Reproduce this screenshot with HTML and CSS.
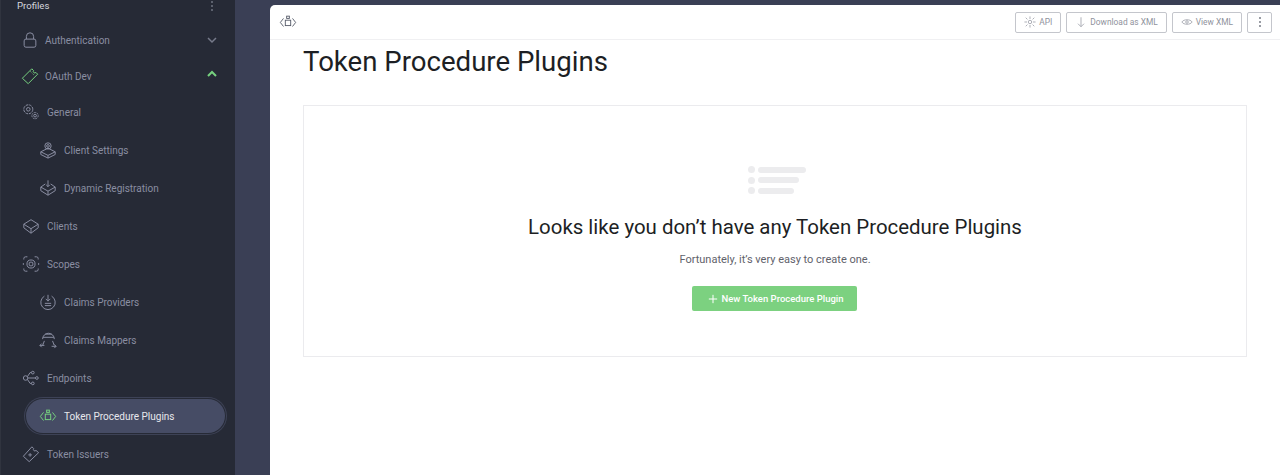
FILE: index.html
```html
<!DOCTYPE html>
<html>
  <head>
    <title>Token Procedure Plugins</title>
    <link rel="stylesheet" href="styles.css">
  </head>
  <body>
    <nav class="sidebar">
      <div class="profiles">
        <span>Profiles</span>
        <svg class="dots" width="4" height="12" viewBox="0 0 4 12"><circle cx="2" cy="2" r="1"/><circle cx="2" cy="6" r="1"/><circle cx="2" cy="10" r="1"/></svg>
      </div>
      <a class="item top">
        <svg class="icon" viewBox="0 0 20 20"><rect x="3.500" y="9" width="13" height="9" rx="2"/><path d="M6 9V6a4 4 0 0 1 8 0v3"/></svg>
        <span class="label">Authentication</span>
        <svg class="chev" viewBox="0 0 12 8"><path d="M2 2l4 4 4-4"/></svg>
      </a>
      <a class="item top">
        <svg class="icon green" viewBox="0 0 20 20"><path d="M1.500 12.500L12 2l2 2a1.500 1.500 0 0 0 2.500 2l2 2L8 18.500z"/><path d="M10.500 5l1 1M13 7.500l1 1"/></svg>
        <span class="label">OAuth Dev</span>
        <svg class="chev green" viewBox="0 0 12 8"><path d="M2 6l4-4 4 4"/></svg>
      </a>
      <a class="item main general">
        <svg class="icon" viewBox="0 0 20 20"><circle cx="7" cy="7" r="2"/><circle cx="7" cy="7" r="5" stroke-dasharray="3 1"/><circle cx="14.500" cy="14" r="1.500"/><circle cx="14.500" cy="14" r="3.500" stroke-dasharray="2 1"/></svg>
        <span class="label">General</span>
      </a>
      <a class="item sub">
        <svg class="icon" viewBox="0 0 20 20"><path d="M10 8L18 12 10 16 2 12z"/><path d="M2 12v3l8 4 8-4v-3M10 16v3"/><circle cx="10" cy="5.500" r="3.500"/><circle cx="10" cy="5.500" r="1.500"/></svg>
        <span class="label">Client Settings</span>
      </a>
      <a class="item sub">
        <svg class="icon" viewBox="0 0 20 20"><path d="M7 5.500L2 9l8 4.500L18 9l-5-3.500"/><path d="M2 9v4l8 5 8-5V9M10 13.500V18M10 1.500v7M8 6.500l2 2 2-2"/></svg>
        <span class="label">Dynamic Registration</span>
      </a>
      <a class="item main">
        <svg class="icon" viewBox="0 0 20 20"><path d="M10 3L18 8l-8 5-8-5z"/><path d="M2 8v4l8 6 8-6V8M10 13v5"/></svg>
        <span class="label">Clients</span>
      </a>
      <a class="item main">
        <svg class="icon" viewBox="0 0 20 20"><path d="M2 5V4a2 2 0 0 1 2-2h2M14 2h2a2 2 0 0 1 2 2v1M18 15v1a2 2 0 0 1-2 2h-2M6 18H4a2 2 0 0 1-2-2v-1M1.500 9v2M18.500 9v2"/><circle cx="10" cy="10" r="4.500"/><rect x="8" y="8" width="4" height="4" rx="1"/></svg>
        <span class="label">Scopes</span>
      </a>
      <a class="item sub">
        <svg class="icon" viewBox="0 0 20 20"><path d="M6 3.500a8 8 0 1 0 8 0M10 2v7M7.500 6.500L10 9l2.500-2.500M6.500 11.500h7M6.500 14h7"/></svg>
        <span class="label">Claims Providers</span>
      </a>
      <a class="item sub">
        <svg class="icon" viewBox="0 0 20 20"><path d="M4 9a6.500 6.500 0 0 1 13 0M7 3.500h7M4.500 7h12"/><path d="M6 11l-2 5M15 11l2 5"/><path d="M1 16h5M3 14l-2 2 2 2M14 17h5M17 15l2 2-2 2"/></svg>
        <span class="label">Claims Mappers</span>
      </a>
      <a class="item main">
        <svg class="icon" viewBox="0 0 20 20"><circle cx="4" cy="10" r="2.500"/><circle cx="16.500" cy="10" r="1.500"/><circle cx="12" cy="4" r="1.500"/><circle cx="12" cy="16" r="1.500"/><path d="M6.500 10H15M6 8.500L9 4h1.500M6 11.500L9 16h1.500"/></svg>
        <span class="label">Endpoints</span>
      </a>
      <a class="item sub active">
        <svg class="icon green" viewBox="0 0 20 20"><path d="M5 6L1.500 10.500 5 15M15 6l3.500 4.500L15 15"/><rect x="7" y="8" width="6" height="6"/><rect x="8.500" y="3.500" width="3" height="2.500"/></svg>
        <span class="label">Token Procedure Plugins</span>
      </a>
      <a class="item main">
        <svg class="icon" viewBox="0 0 20 20"><path d="M1.500 12.500L11 2l2 2a1.500 1.500 0 0 0 2.500 2l3 2.500L8 18.500z"/><path d="M7 11h4M9 9v4"/></svg>
        <span class="label">Token Issuers</span>
      </a>
    </nav>

    <div class="gutter"></div>

    <main class="content">
      <header class="toolbar">
        <svg class="tool-logo" viewBox="0 0 20 20"><path d="M5 6L1.500 10.500 5 15M15 6l3.500 4.500L15 15"/><rect x="7" y="8" width="6" height="6"/><rect x="8.500" y="3.500" width="3" height="2.500"/></svg>
        <div class="actions">
          <button class="btn">
            <svg viewBox="0 0 14 14"><circle cx="7" cy="7" r="2"/><path d="M7 0.500v3M7 10.500v3M0.500 7h3M10.500 7h3M2 2l2 2M10 10l2 2M2 12l2-2M10 4l2-2"/></svg>
            API
          </button>
          <button class="btn">
            <svg viewBox="0 0 14 14"><path d="M7 1.500v11M3.500 9L7 12.500 10.500 9"/></svg>
            Download as XML
          </button>
          <button class="btn">
            <svg viewBox="0 0 14 14"><path d="M1 7c2-3.500 10-3.500 12 0-2 3.500-10 3.500-12 0z"/><circle cx="7" cy="7" r="1.500"/></svg>
            View XML
          </button>
          <button class="btn more">
            <svg viewBox="0 0 4 12"><circle cx="2" cy="2" r="1"/><circle cx="2" cy="6" r="1"/><circle cx="2" cy="10" r="1"/></svg>
          </button>
        </div>
      </header>

      <section class="page">
        <h1>Token Procedure Plugins</h1>
        <div class="empty">
          <div class="placeholder">
            <div class="line"><i></i><b class="w1"></b></div>
            <div class="line"><i></i><b class="w2"></b></div>
            <div class="line"><i></i><b class="w3"></b></div>
          </div>
          <h2>Looks like you don’t have any Token Procedure Plugins</h2>
          <p>Fortunately, it’s very easy to create one.</p>
          <button class="create">
            <svg viewBox="0 0 12 12"><path d="M6 1v10M1 6h10"/></svg>
            New Token Procedure Plugin
          </button>
        </div>
      </section>
    </main>
  </body>
</html>
```

FILE: styles.css
```css
html, body {
  height: 100%;
}

body {
  margin: 0;
  display: flex;
  height: 475px;
  overflow: hidden;
  background-color: #3a3f55;
  font-family: Roboto, "Liberation Sans", sans-serif;
}

.sidebar {
  width: 235px;
  height: 475px;
  flex-shrink: 0;
  box-sizing: border-box;
  padding-left: 1px;
  background-color: #262a36;
  border-left: 1px solid #30343f;
  overflow: hidden;
}

.profiles {
  display: flex;
  align-items: flex-start;
  justify-content: space-between;
  height: 22px;
  padding: 0 21px 0 15px;
  font-size: 9.600px;
  line-height: 12px;
  color: #d5d7dd;
}

.dots {
  fill: #6f7482;
}

.item {
  display: flex;
  align-items: center;
  height: 38px;
  font-size: 10px;
  color: #8a8ea2;
}

.icon {
  width: 18px;
  height: 18px;
  flex-shrink: 0;
  fill: none;
  stroke: #8a8ea2;
  stroke-width: 1.100;
}

.icon.green {
  stroke: #76d17f;
}

.top {
  height: 36px;
  padding-left: 19px;
}

.top .label {
  margin-left: 6px;
  flex: 1;
}

.chev {
  width: 12px;
  height: 8px;
  margin-right: 17px;
  fill: none;
  stroke: #767a8a;
  stroke-width: 1.500;
}

.chev.green {
  stroke: #76d17f;
  stroke-width: 2;
  margin-bottom: 4px;
}

.main {
  padding-left: 20px;
}

.main .label {
  margin-left: 7px;
}

.general {
  height: 36px;
  margin-bottom: 1px;
}

.sub {
  padding-left: 37px;
}

.sub .label {
  margin-left: 7px;
}

.active {
  box-sizing: border-box;
  width: 199px;
  height: 34px;
  margin: 2px 0 2px 24px;
  padding-left: 13px;
  border-radius: 18px;
  background-color: #464c65;
  box-shadow: 0 0 0 1px #262a36, 0 0 0 2px #3d4256;
  color: #e6e7ec;
}

.gutter {
  width: 35px;
  flex-shrink: 0;
}

.content {
  flex: 1;
  margin-top: 5px;
  background-color: #fff;
  border-top-left-radius: 5px;
  min-width: 0;
}

.toolbar {
  display: flex;
  align-items: center;
  justify-content: space-between;
  height: 34px;
  padding: 0 8px 0 9px;
  border-bottom: 1px solid #f0f0f2;
}

.tool-logo {
  width: 18px;
  height: 18px;
  fill: none;
  stroke: #555a68;
  stroke-width: 1;
}

.actions {
  display: flex;
  gap: 5px;
}

.btn {
  display: flex;
  align-items: center;
  gap: 3px;
  height: 21px;
  padding: 0 8px;
  background-color: #fff;
  border: 1px solid #c4c6cc;
  border-radius: 2px;
  font-family: inherit;
  font-size: 8.400px;
  color: #8f929c;
}

.btn svg {
  width: 12px;
  height: 12px;
  fill: none;
  stroke: #a0a3ac;
  stroke-width: 1;
}

.btn.more {
  width: 25px;
  padding: 0;
  justify-content: center;
}

.btn.more svg {
  fill: #777b86;
  stroke: none;
}

.page {
  padding: 0 33px;
}

h1 {
  margin: 4px 0 26px;
  height: 35px;
  font-size: 27.600px;
  line-height: 35px;
  font-weight: 400;
  color: #1d1f24;
}

.empty {
  display: flex;
  flex-direction: column;
  align-items: center;
  box-sizing: border-box;
  height: 252px;
  padding-top: 60px;
  border: 1px solid #ebebee;
}

.placeholder {
  display: flex;
  flex-direction: column;
  gap: 3.500px;
  width: 58px;
  margin: 0 0 20px 4px;
}

.line {
  display: flex;
  align-items: center;
  gap: 3px;
}

.line i {
  width: 7px;
  height: 7px;
  border-radius: 50%;
  background-color: #ececee;
}

.line b {
  height: 6px;
  border-radius: 3px;
  background-color: #ececee;
}

.w1 { width: 48px; }
.w2 { width: 41px; }
.w3 { width: 36px; }

h2 {
  margin: 0;
  font-size: 20.450px;
  line-height: 26px;
  font-weight: 400;
  color: #1d1f24;
}

.empty p {
  margin: 13px 0 0;
  font-size: 11px;
  line-height: 14px;
  color: #5f626b;
}

.create {
  display: flex;
  align-items: center;
  justify-content: center;
  gap: 3px;
  width: 165px;
  height: 25px;
  margin: 19px 2px 0 0;
  padding: 0 0 0 4px;
  border: none;
  border-radius: 2px;
  background-color: #7cd180;
  font-family: inherit;
  font-size: 9.500px;
  font-weight: 500;
  color: #fff;
}

.create svg {
  width: 10px;
  height: 10px;
  fill: none;
  stroke: #fff;
  stroke-width: 1.200;
}
```
